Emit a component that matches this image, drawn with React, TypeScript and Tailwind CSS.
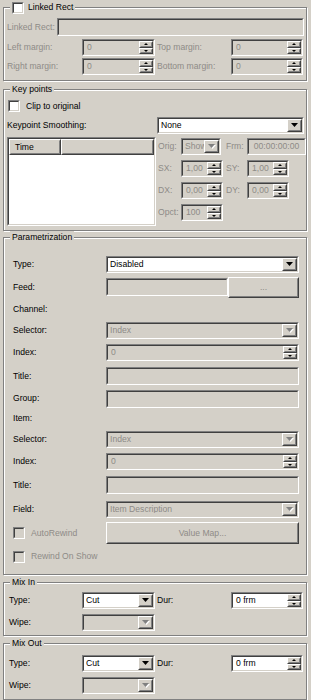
import type { ReactNode } from 'react'

// classic win32 look: face colour + bevel helpers
const FACE = 'bg-[#d4d0c8]'
const GRAY = 'text-[#8e8b87]'

function Sunken({ className = '', bg = 'bg-white', children }: { className?: string; bg?: string; children?: ReactNode }) {
    return (
        <div className={`shrink-0 border border-t-[#808080] border-l-[#808080] border-r-white border-b-white ${className}`}>
            <div className={`flex h-full items-center overflow-hidden border border-t-[#404040] border-l-[#404040] border-r-[#d4d0c8] border-b-[#d4d0c8] ${bg}`}>
                {children}
            </div>
        </div>
    )
}

function Raised({ className = '', children }: { className?: string; children?: ReactNode }) {
    return (
        <div className={`shrink-0 border border-t-white border-l-white border-r-[#404040] border-b-[#404040] ${className}`}>
            <div className="flex h-full items-center justify-center border border-t-[#d4d0c8] border-l-[#d4d0c8] border-r-[#808080] border-b-[#808080] bg-[#d4d0c8]">
                {children}
            </div>
        </div>
    )
}

function Arrow({ gray = false }: { gray?: boolean }) {
    return (
        <svg width="8" height="5" viewBox="0 0 8 5">
            {gray && <polygon points="1,1 8,1 4.5,5" fill="#fff" />}
            <polygon points="0,0 7,0 3.5,4" fill={gray ? '#808080' : '#000'} />
        </svg>
    )
}

function SmallArrow({ up = false }: { up?: boolean }) {
    return (
        <svg width="4" height="2" viewBox="0 0 4 2" className="overflow-visible">
            <polygon points={up ? '0,2 4,2 2,0' : '0,0 4,0 2,2'} fill="#000" />
        </svg>
    )
}

function Combo({ className = '', value = '', disabled = false }: { className?: string; value?: string; disabled?: boolean }) {
    return (
        <Sunken className={className} bg={disabled ? FACE : 'bg-white'}>
            <span className={`min-w-0 flex-1 overflow-hidden whitespace-nowrap pl-[2px] ${disabled ? GRAY : ''}`}>{value}</span>
            <Raised className="w-[15px] self-stretch">
                <Arrow gray={disabled} />
            </Raised>
        </Sunken>
    )
}

function Spin({ className = '', value = '', disabled = false }: { className?: string; value?: string; disabled?: boolean }) {
    return (
        <Sunken className={className} bg={disabled ? FACE : 'bg-white'}>
            <span className={`min-w-0 flex-1 overflow-hidden whitespace-nowrap pl-[3px] ${disabled ? GRAY : ''}`}>{value}</span>
            <div className="flex w-[14px] flex-col self-stretch">
                <Raised className="flex-1">
                    <SmallArrow up />
                </Raised>
                <Raised className="flex-1">
                    <SmallArrow />
                </Raised>
            </div>
        </Sunken>
    )
}

function Check({ disabled = false }: { disabled?: boolean }) {
    return <Sunken className="h-[12px] w-[12px]" bg={disabled ? FACE : 'bg-white'} />
}

function Group({ title, className = '', children }: { title: ReactNode; className?: string; children?: ReactNode }) {
    return (
        <div className={`relative mx-[3px] w-[304px] shrink-0 border border-[#808080] shadow-[inset_1px_1px_0_#fff,1px_1px_0_#fff] ${className}`}>
            <div className="absolute -top-[7px] left-[6px] flex h-[13px] items-center gap-[4px] bg-[#d4d0c8] px-[2px]">{title}</div>
            {children}
        </div>
    )
}

function Row({ h, label, gray = false, children }: { h: string; label?: string; gray?: boolean; children?: ReactNode }) {
    return (
        <div className={`flex items-center ${h}`}>
            <span className={`w-[93px] shrink-0 ${gray ? GRAY : ''}`}>{label}</span>
            {children}
        </div>
    )
}

export default function App() {
    return (
        <div className="flex h-[700px] w-[311px] flex-col overflow-hidden bg-[#d4d0c8] pt-[7px] font-[family-name:'Liberation_Sans',Arial,sans-serif] text-[8.6px] leading-none text-black">
            {/* Linked Rect */}
            <Group
                className="h-[74px]"
                title={
                    <>
                        <Check />
                        <span>Linked Rect</span>
                    </>
                }
            >
                <div className="flex flex-col pl-[3px] pt-[10px]">
                    <div className="flex h-[18px] items-center">
                        <span className={`w-[50px] shrink-0 whitespace-nowrap ${GRAY}`}>Linked Rect:</span>
                        <Sunken className="h-[18px] w-[247px]" bg={FACE} />
                    </div>
                    <div className="mt-[3px] flex h-[17px] items-center">
                        <span className={`w-[75px] shrink-0 ${GRAY}`}>Left margin:</span>
                        <Spin className="h-[17px] w-[73px]" value="0" disabled />
                        <span className={`w-[76px] shrink-0 pl-[2px] ${GRAY}`}>Top margin:</span>
                        <Spin className="h-[17px] w-[72px]" value="0" disabled />
                    </div>
                    <div className="mt-[2px] flex h-[17px] items-center">
                        <span className={`w-[75px] shrink-0 ${GRAY}`}>Right margin:</span>
                        <Spin className="h-[17px] w-[73px]" value="0" disabled />
                        <span className={`w-[76px] shrink-0 pl-[2px] ${GRAY}`}>Bottom margin:</span>
                        <Spin className="h-[17px] w-[72px]" value="0" disabled />
                    </div>
                </div>
            </Group>

            {/* Key points */}
            <Group className="mt-[8px] h-[142px]" title={<span>Key points</span>}>
                <div className="flex flex-col pl-[3px] pt-[9px]">
                    <div className="flex h-[14px] items-center gap-[6px] pl-[1px]">
                        <Check />
                        <span>Clip to original</span>
                    </div>
                    <div className="mt-[4px] flex h-[17px] items-center">
                        <span className="w-[150px] shrink-0">Keypoint Smoothing:</span>
                        <Combo className="h-[17px] w-[147px]" value="None" />
                    </div>
                    <div className="mt-[3px] flex">
                        <Sunken className="h-[89px] w-[149px]">
                            <div className="flex h-full w-full flex-col self-stretch">
                                <div className="flex h-[16px] shrink-0">
                                    <Raised className="h-full w-[52px]">
                                        <span className="w-full pl-[4px]">Time</span>
                                    </Raised>
                                    <Raised className="h-full flex-1" />
                                </div>
                            </div>
                        </Sunken>
                        <div className="ml-[2px] flex flex-col gap-[5px] pt-[1px]">
                            <div className="flex h-[17px] items-center">
                                <span className={`w-[23px] shrink-0 ${GRAY}`}>Orig:</span>
                                <Combo className="h-[17px] w-[40px]" value="Show" disabled />
                                <span className={`w-[26px] shrink-0 pl-[5px] ${GRAY}`}>Frm:</span>
                                <Sunken className="h-[17px] w-[59px]" bg={FACE}>
                                    <span className={`w-full text-center ${GRAY}`}>00:00:00:00</span>
                                </Sunken>
                            </div>
                            <div className="flex h-[17px] items-center">
                                <span className={`w-[23px] shrink-0 ${GRAY}`}>SX:</span>
                                <Spin className="h-[17px] w-[42px]" value="1,00" disabled />
                                <span className={`w-[24px] shrink-0 pl-[3px] ${GRAY}`}>SY:</span>
                                <Spin className="h-[17px] w-[42px]" value="1,00" disabled />
                            </div>
                            <div className="flex h-[17px] items-center">
                                <span className={`w-[23px] shrink-0 ${GRAY}`}>DX:</span>
                                <Spin className="h-[17px] w-[42px]" value="0,00" disabled />
                                <span className={`w-[24px] shrink-0 pl-[3px] ${GRAY}`}>DY:</span>
                                <Spin className="h-[17px] w-[42px]" value="0,00" disabled />
                            </div>
                            <div className="flex h-[17px] items-center">
                                <span className={`w-[23px] shrink-0 ${GRAY}`}>Opct:</span>
                                <Spin className="h-[17px] w-[42px]" value="100" disabled />
                            </div>
                        </div>
                    </div>
                </div>
            </Group>

            {/* Parametrization */}
            <Group className="mt-[6px] h-[338px]" title={<span>Parametrization</span>}>
                <div className="flex flex-col pl-[9px] pt-[15px]">
                    <Row h="h-[23px]" label="Type:">
                        <Combo className="h-[17px] w-[193px]" value="Disabled" />
                    </Row>
                    <Row h="h-[22px]" label="Feed:">
                        <Sunken className="h-[18px] w-[122px]" bg={FACE} />
                        <Raised className="h-[21px] w-[71px]">
                            <span className={GRAY}>...</span>
                        </Raised>
                    </Row>
                    <Row h="h-[22px]" label="Channel:" />
                    <Row h="h-[21px]" label="Selector:">
                        <Combo className="h-[17px] w-[193px]" value="Index" disabled />
                    </Row>
                    <Row h="h-[23px]" label="Index:">
                        <Spin className="h-[17px] w-[193px]" value="0" disabled />
                    </Row>
                    <Row h="h-[24px]" label="Title:">
                        <Sunken className="h-[18px] w-[193px]" bg={FACE} />
                    </Row>
                    <Row h="h-[21px]" label="Group:">
                        <Sunken className="h-[18px] w-[193px]" bg={FACE} />
                    </Row>
                    <Row h="h-[19px]" label="Item:" />
                    <Row h="h-[22px]" label="Selector:">
                        <Combo className="h-[17px] w-[193px]" value="Index" disabled />
                    </Row>
                    <Row h="h-[23px]" label="Index:">
                        <Spin className="h-[17px] w-[193px]" value="0" disabled />
                    </Row>
                    <Row h="h-[24px]" label="Title:">
                        <Sunken className="h-[18px] w-[193px]" bg={FACE} />
                    </Row>
                    <Row h="h-[24px]" label="Field:">
                        <Combo className="h-[17px] w-[193px]" value="Item Description" disabled />
                    </Row>
                    <div className="flex h-[24px] items-center">
                        <div className="flex w-[93px] shrink-0 items-center gap-[6px]">
                            <Check disabled />
                            <span className={GRAY}>AutoRewind</span>
                        </div>
                        <Raised className="h-[22px] w-[193px]">
                            <span className={GRAY}>Value Map...</span>
                        </Raised>
                    </div>
                    <div className="flex h-[23px] items-center gap-[6px]">
                        <Check disabled />
                        <span className={GRAY}>Rewind On Show</span>
                    </div>
                </div>
            </Group>

            {/* Mix In */}
            <Group className="mt-[7px] h-[54px]" title={<span>Mix In</span>}>
                <div className="flex flex-col gap-[5px] pl-[5px] pt-[9px]">
                    <div className="flex h-[17px] items-center">
                        <span className="w-[73px] shrink-0">Type:</span>
                        <Combo className="h-[17px] w-[73px]" value="Cut" />
                        <span className="w-[76px] shrink-0 pl-[2px]">Dur:</span>
                        <Spin className="h-[17px] w-[72px]" value="0 frm" />
                    </div>
                    <div className="flex h-[17px] items-center">
                        <span className="w-[73px] shrink-0">Wipe:</span>
                        <Combo className="h-[17px] w-[73px]" disabled />
                    </div>
                </div>
            </Group>

            {/* Mix Out */}
            <Group className="mt-[7px] h-[57px]" title={<span>Mix Out</span>}>
                <div className="flex flex-col gap-[5px] pl-[5px] pt-[11px]">
                    <div className="flex h-[17px] items-center">
                        <span className="w-[73px] shrink-0">Type:</span>
                        <Combo className="h-[17px] w-[73px]" value="Cut" />
                        <span className="w-[76px] shrink-0 pl-[2px]">Dur:</span>
                        <Spin className="h-[17px] w-[72px]" value="0 frm" />
                    </div>
                    <div className="flex h-[17px] items-center">
                        <span className="w-[73px] shrink-0">Wipe:</span>
                        <Combo className="h-[17px] w-[73px]" disabled />
                    </div>
                </div>
            </Group>
        </div>
    )
}
